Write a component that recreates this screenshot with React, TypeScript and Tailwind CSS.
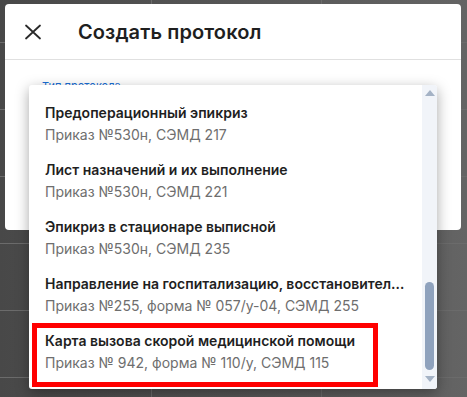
import React from 'react';

const items = [
    { title: 'Предоперационный эпикриз', sub: 'Приказ №530н, СЭМД 217' },
    { title: 'Лист назначений и их выполнение', sub: 'Приказ №530н, СЭМД 221' },
    { title: 'Эпикриз в стационаре выписной', sub: 'Приказ №530н, СЭМД 235' },
    { title: 'Направление на госпитализацию, восстановительное лечение, обследование, консультацию', sub: 'Приказ №255, форма № 057/у-04, СЭМД 255' },
    { title: 'Карта вызова скорой медицинской помощи', sub: 'Приказ № 942, форма № 110/у, СЭМД 115' },
];

const App = () => {
    return (
        <div
            className="relative w-[467px] h-[397px] overflow-hidden bg-gradient-to-r from-[#484848] to-[#646464]"
            style={{ fontFamily: 'Inter, "Noto Sans", sans-serif' }}
        >
            {/* table behind the overlay */}
            <div className="absolute inset-0 flex flex-col">
                <div className="h-[43px] shrink-0 border-b border-[#6b6b6b]" />
                {[0, 1, 2, 3, 4].map((i) => (
                    <div key={i} className="h-[67px] shrink-0 border-b border-[#6b6b6b]" />
                ))}
            </div>
            <div className="absolute inset-0 flex">
                <div className="w-[152px] shrink-0 border-r border-[#6b6b6b]" />
                <div className="w-[170px] shrink-0 border-r border-[#6b6b6b]" />
            </div>

            {/* dialog */}
            <div className="absolute left-[5px] top-[4px] w-[456px] h-[226px] bg-white rounded-[4px]">
                <div className="h-[56px] flex items-center border-b border-[#e0e0e0]">
                    <svg className="ml-[15px]" width="26" height="26" viewBox="0 0 26 26">
                        <path d="M6 6.5 L20 19.5 M20 6.5 L6 19.5" stroke="#2a2a2a" strokeWidth="1.8" strokeLinecap="round" />
                    </svg>
                    <h2 className="ml-[32px] text-[20px] font-semibold text-[#1f1f1f] tracking-[0.1px]">Создать протокол</h2>
                </div>
                <div className="pl-[37px] pt-[18px] text-[11px] leading-4 text-[#1a6fd6]">Тип протокола</div>
            </div>

            {/* dropdown */}
            <div className="absolute left-[29px] top-[85px] w-[408px] h-[304px] bg-white rounded-[3px] shadow-[0_4px_14px_rgba(0,0,0,0.35)] flex overflow-hidden">
                <div className="flex-1 min-w-0 pt-[10px]">
                    {items.map((item) => (
                        <div key={item.sub} className="h-[57px] px-4 flex flex-col justify-center">
                            <div className="text-[14px] leading-5 font-semibold text-[#1f1f1f] truncate">{item.title}</div>
                            <div className="mt-[2px] text-[14px] leading-5 text-[#6e6e6e] truncate">{item.sub}</div>
                        </div>
                    ))}
                </div>
                <div className="w-[15px] shrink-0 bg-[#f1f4f9] flex flex-col items-center">
                    <svg className="mt-[5px]" width="10" height="6" viewBox="0 0 10 6">
                        <path d="M0 6 L5 0 L10 6 Z" fill="#a4b2c5" />
                    </svg>
                    <div className="mt-[186px] w-[9px] h-[88px] rounded-full bg-[#8fa2bd]" />
                    <svg className="mt-[6px]" width="10" height="6" viewBox="0 0 10 6">
                        <path d="M0 0 L10 0 L5 6 Z" fill="#a4b2c5" />
                    </svg>
                </div>
            </div>

            {/* highlight */}
            <div className="absolute left-[32px] top-[323px] w-[346px] h-[64px] border-[5px] border-[#ff0000]" />
        </div>
    );
};

export default App;
